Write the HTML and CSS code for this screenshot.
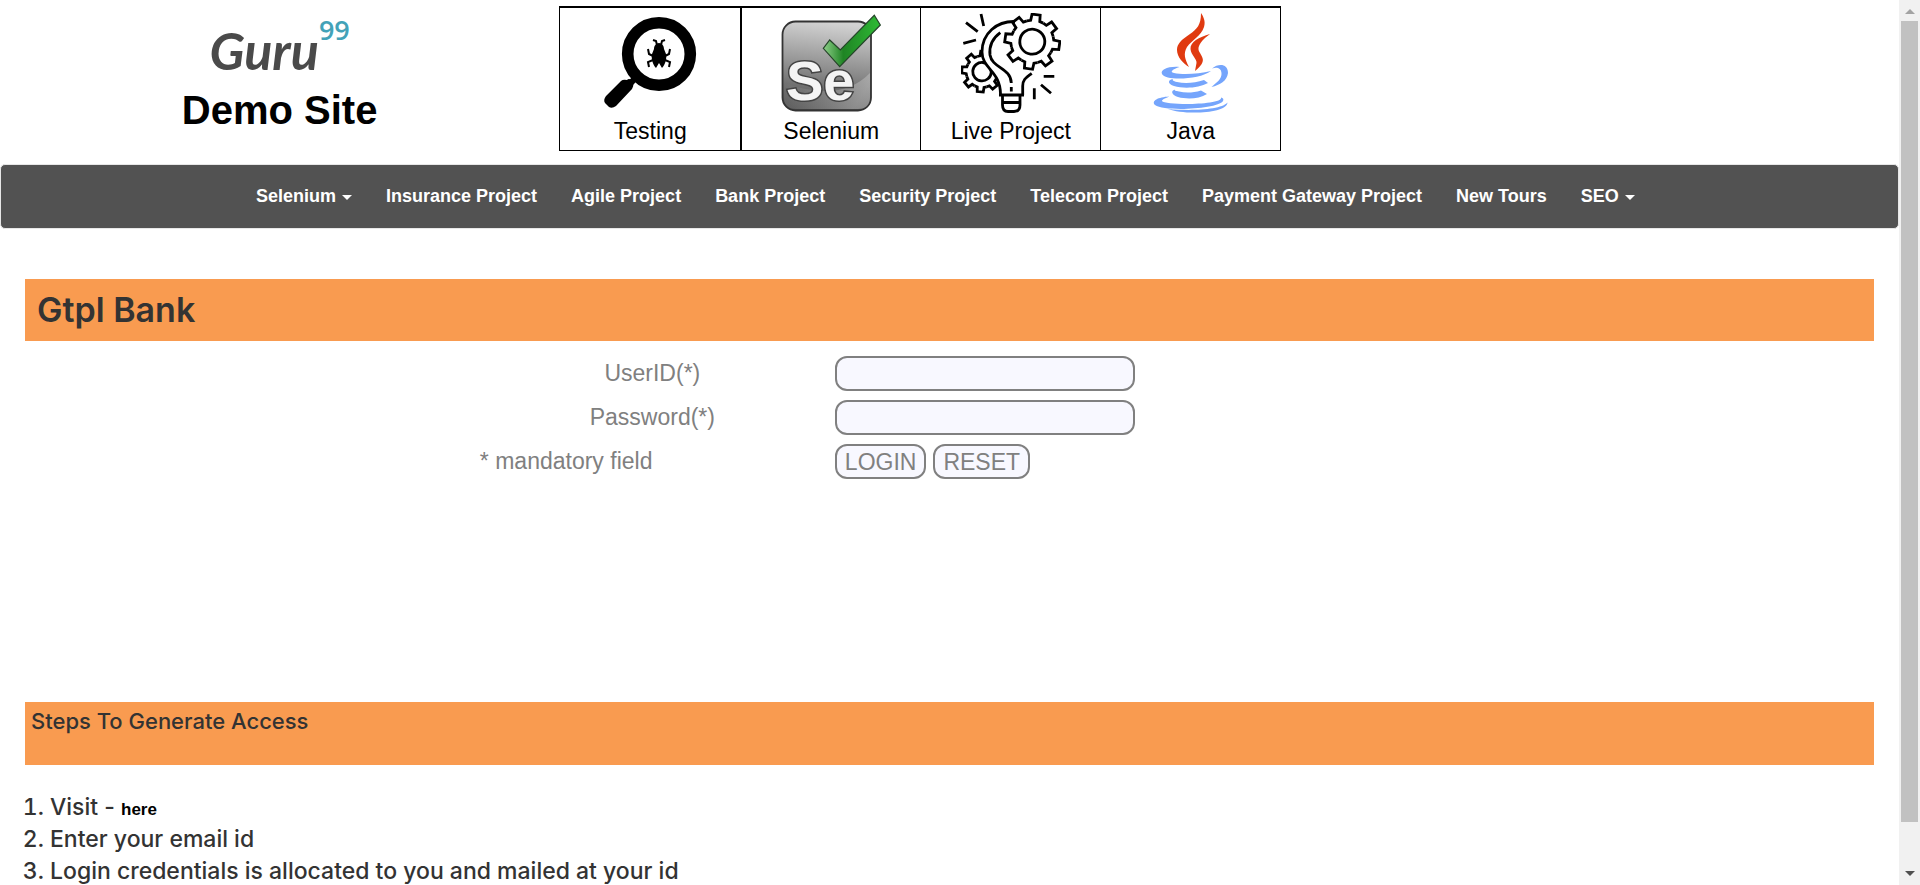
FILE: index.html
```html
<!DOCTYPE html>
<html lang="en">
<head>
<meta charset="utf-8">
<title>Gtpl Bank Home Page</title>
<link rel="stylesheet" href="styles.css">
</head>
<body>
<div class="page">
  <header class="top">
    <div class="brand">
      <div class="logo">Guru<span class="logo-sup">99</span></div>
      <h2 class="site-name">Demo Site</h2>
    </div>
    <div class="topics">
      <a class="topic" href="#testing">
        <svg class="topic-icon" viewBox="0 0 100 100" aria-hidden="true">
          <circle cx="59" cy="41" r="31.3" fill="none" stroke="#000" stroke-width="11.6"/>
          <path d="M36 64l-6 7" stroke="#000" stroke-width="6"/>
          <path d="M27 67Q29 65 31 67L33 70Q34 73 32 76L16 93Q12 96 9 94L5 90Q3 87 6 83L21 68Q23 66 27 67z"/>
          <path d="M59 30c3 0 5 3 5 6l2 5c1 5-1 11-4 14l-3-5-3 5c-3-3-5-9-4-14l2-5c0-3 2-6 5-6z"/>
          <path d="M57 32l-1-4-3-1M61 32l1-4 3-1M53 43l-4-2-1-5M65 43l4-2 1-5M53 47l-5 2 1 5M65 47l5 2-1 5" fill="none" stroke="#000" stroke-width="2"/>
        </svg>
        <span>Testing</span>
      </a>
      <a class="topic topic-wide-rule" href="#selenium">
        <svg class="topic-icon" viewBox="0 0 100 100" aria-hidden="true">
          <defs>
            <linearGradient id="tile" x1="0.4" y1="0" x2="0.3" y2="1">
              <stop offset="0" stop-color="#d2d2d2"/><stop offset="0.55" stop-color="#8a8a8a"/><stop offset="1" stop-color="#4a4a4a"/>
            </linearGradient>
            <linearGradient id="shade" x1="0" y1="0" x2="1" y2="0.3">
              <stop offset="0" stop-color="#666" stop-opacity="0.3"/><stop offset="1" stop-color="#ddd" stop-opacity="0.4"/>
            </linearGradient>
            <linearGradient id="tick" x1="0" y1="0" x2="1" y2="0">
              <stop offset="0" stop-color="#8fd08a"/><stop offset="0.35" stop-color="#1f8424"/><stop offset="1" stop-color="#2fbb35"/>
            </linearGradient>
          </defs>
          <rect x="1.5" y="8.5" width="88.5" height="89" rx="13" fill="url(#tile)" stroke="#333" stroke-width="1.8"/>
          <path d="M3 70Q60 90 89 60V84Q89 96 77 96H15Q3 96 3 84z" fill="url(#shade)"/>
          <text class="se-mark" x="5" y="87">Se</text>
          <path d="M42.3 35.3L48.7 27 59.3 37 93.3 2.3 99.3 12 58.7 53.7z" fill="url(#tick)" stroke="#26452a" stroke-width="1.2"/>
        </svg>
        <span>Selenium</span>
      </a>
      <a class="topic" href="#live-project">
        <svg class="topic-icon" viewBox="0 0 100 100" fill="none" stroke="#000" stroke-width="2.8" aria-hidden="true">
          <defs>
            <path id="tooth" d="M-8.2-19.9L-4.6-21-4.1-27.3H4.1L4.6-21 8.2-19.9" vector-effect="non-scaling-stroke"/>
            <g id="gear">
              <circle r="21" fill="#fff" stroke="none"/>
              <use href="#tooth"/><use href="#tooth" transform="rotate(45)"/><use href="#tooth" transform="rotate(90)"/><use href="#tooth" transform="rotate(135)"/><use href="#tooth" transform="rotate(180)"/><use href="#tooth" transform="rotate(225)"/><use href="#tooth" transform="rotate(270)"/><use href="#tooth" transform="rotate(315)"/>
              <circle r="12.5" vector-effect="non-scaling-stroke"/>
            </g>
          </defs>
          <use href="#gear" transform="translate(21 58.7) rotate(5) scale(.74)"/>
          <path d="M54 8.5C36 8 21 20 21 39C21 55 40 58 39.5 82H61.7V72C62 66 66 64 70.7 60.3L75 20z" fill="#fff" stroke="none"/>
          <path d="M54 8.5C36 8 21 20 21 39C21 56 40 58 39.5 82M70.7 60.3C66 64 61.7 66 61.7 73V82"/>
          <path d="M39.3 19.7C32 25 28 33 29 42C31 55 50 55 50.3 70M50.3 74v4.500"/>
          <path d="M38 82H63M41.500 82V92Q41.500 98.500 47 98.500H53Q59 98.500 59 92V82M42 89.500H59" />
          <use href="#gear" transform="translate(71.3 28.7) rotate(8)"/>
          <path d="M20 1l2.700 12M5 9.700l11.700 9M2.300 30.300l12.700-3.300M82.700 63.300h10.600M80 71.700l10 8.600M73.300 75.300v11"/>
        </svg>
        <span>Live Project</span>
      </a>
      <a class="topic" href="#java">
        <svg class="topic-icon" viewBox="0 0 100 100" aria-hidden="true">
          <g fill="#e03a10">
            <path d="M60 0C60 12 56 16 49 21C40 27 36 31 36 37C36 44 42 50 48 54C44 46 42 41 46 34C51 27 60 23 63 14C65 8 62 3 60 0z"/>
            <path d="M69 21C58 24 49 29 49.500 36C50 42 56 46 55.500 50L54 58C60 53 63 49 61.500 45C60 40 56 38 58 33C60 28 65 24 69 21z"/>
          </g>
          <g fill="#75a5fc">
            <path d="M38.500 54C27 53 19 57 21 61C24 68 58 67 70 58C58 61 42 62 33 60C28 59 32 56 38.500 54z"/>
            <path d="M71 55.500C78 50 87 51 87 60C86 68 79 72 70.500 74C76 69 81 66 80.500 60C80 55 76 54 71 55.500z"/>
            <path d="M32 66C26 67 27 71 33 73C43 76 58 75 67 70L63 67C54 70 44 71 36 69C32 68 31 67 32 66z"/>
            <path d="M34 76.500C29 78 31 82 37 84C46 86.500 58 86 66 81L60 77.500C52 80 44 80 38 78.500C35 78 33 77.500 34 76.500z"/>
            <path d="M28.300 83.500C17 84 10 88 14 92C24 99 77 96 82 88C83 86 82 85 80 84.500C82 89 60 91 46 91C34 91 22 90 21 88C21 86 26 85 28.300 83.500z"/>
            <path d="M27 96C42 102 86 101 86.500 89.500C80 97 50 98 27 96z"/>
          </g>
        </svg>
        <span>Java</span>
      </a>
    </div>
  </header>

  <nav class="navbar">
    <a class="nav-link has-menu" href="#">Selenium</a>
    <a class="nav-link" href="#">Insurance Project</a>
    <a class="nav-link" href="#">Agile Project</a>
    <a class="nav-link" href="#">Bank Project</a>
    <a class="nav-link" href="#">Security Project</a>
    <a class="nav-link" href="#">Telecom Project</a>
    <a class="nav-link" href="#">Payment Gateway Project</a>
    <a class="nav-link" href="#">New Tours</a>
    <a class="nav-link has-menu" href="#">SEO</a>
  </nav>

  <main class="content">
    <h1 class="bank-title">Gtpl Bank</h1>
    <form class="login">
      <label class="field-label" for="uid">UserID(*)</label>
      <input class="field" id="uid" name="uid" type="text">
      <label class="field-label" for="password">Password(*)</label>
      <input class="field" id="password" name="password" type="password">
      <span>* mandatory field</span>
      <div class="actions">
        <button class="action" type="submit">LOGIN</button>
        <button class="action" type="reset">RESET</button>
      </div>
    </form>
    <h3 class="steps-title">Steps To Generate Access</h3>
    <ol class="steps">
      <li>Visit - <a class="here" href="#">here</a></li>
      <li>Enter your email id</li>
      <li>Login credentials is allocated to you and mailed at your id</li>
    </ol>
  </main>
</div>
<div class="scrollbar" aria-hidden="true">
  <span class="arrow arrow-up"></span>
  <span class="thumb"></span>
  <span class="arrow arrow-down"></span>
</div>
</body>
</html>
```
FILE: styles.css
```css
* { box-sizing: border-box; }

body {
  margin: 0;
  display: flex;
  height: 100vh;
  overflow: hidden;
  background: #fff;
  color: #333;
  font-family: "Liberation Sans", Arial, sans-serif;
}

a { color: inherit; text-decoration: none; }

.page { flex: 1; min-width: 0; overflow: hidden; }

/* Header */
.top { display: flex; align-items: flex-start; padding: 6px 0 13px; }
.brand { width: 29.45%; padding-top: 12px; text-align: center; color: #000; }
.logo {
  display: flex;
  justify-content: center;
  color: #4a4a4a;
  font: italic 700 52px/64px Lato, sans-serif;
}
.logo-sup { color: #43a2b8; font: 600 27px/24px "Open Sans", sans-serif; }
.site-name { margin: 4px 0 0; font-size: 40px; line-height: 48px; }

.topics { display: flex; border: 1px solid #000; border-top-width: 2px; }
.topic {
  width: 180px;
  padding: 5px 0;
  border-left: 1px solid #000;
  display: flex;
  flex-direction: column;
  align-items: center;
  gap: 4px;
  color: #000;
  font-size: 23px;
  line-height: 28px;
}
.topic:first-child { border-left: 0; }
.topic-wide-rule { border-left-width: 2px; }
.topic-icon { width: 100px; height: 100px; }
.se-mark {
  font: bold 56px "Liberation Sans", Arial, sans-serif;
  fill: #f4f4f4;
  stroke: #444;
  stroke-width: 3px;
  paint-order: stroke;
}

/* Navigation */
.navbar {
  display: flex;
  padding: 0 0 0 238px;
  background: #525252;
  border: 1px solid #e7e7e7;
  border-radius: 5px;
  color: #fff;
}
.nav-link {
  padding: 21px 17px;
  font-size: 18px;
  font-weight: bold;
  line-height: 21px;
  white-space: nowrap;
}
.has-menu::after {
  content: "";
  display: inline-block;
  margin-left: 6px;
  vertical-align: middle;
  border: 5px solid transparent;
  border-top-color: #fff;
  border-bottom: 0;
}

/* Content */
.content { padding: 50px 25px 0; }
.bank-title,
.steps-title,
.steps { font-family: Inter, sans-serif; font-weight: 500; }
.bank-title {
  margin: 0;
  padding: 11px 12px;
  background: #f99b50;
  font-size: 34px;
  font-weight: 600;
  line-height: 40px;
}

.login {
  display: grid;
  grid-template-columns: 345px 1fr;
  grid-auto-rows: 35px;
  gap: 9px 10px;
  min-height: 361px;
  padding: 15px 0 0 24.6%;
  align-content: start;
  color: #808080;
  font-size: 23px;
  line-height: 34px;
}
.field-label { text-align: center; }
.field,
.action {
  height: 35px;
  border: 2px solid #808080;
  border-radius: 12px;
  background: #f8f8ff;
  color: #808080;
  font: 23px/28px "Liberation Sans", Arial, sans-serif;
}
.field { width: 300px; padding: 0 8px; }
.actions { display: flex; gap: 7px; }
.action { padding: 0 8px; }

.steps-title {
  margin: 0;
  padding: 6px 6px 31px;
  background: #f99b50;
  font-size: 22px;
  line-height: 26px;
}
.steps {
  margin: 26px 0 0;
  padding-left: 25px;
  font-size: 23px;
  line-height: 32px;
}
.here { color: #000; font: bold 17px "Liberation Sans", Arial, sans-serif; }

/* Scrollbar */
.scrollbar {
  width: 21px;
  padding: 9px 2px;
  display: flex;
  flex-direction: column;
  align-items: center;
  background: #f1f1f1;
}
.arrow { border: 5px solid transparent; }
.arrow-up { border-top: 0; border-bottom-color: #a3a3a3; }
.arrow-down { margin-top: auto; border-bottom: 0; border-top-color: #505050; }
.thumb { width: 17px; height: 92.4%; margin-top: 7px; background: #c1c1c1; }
```
